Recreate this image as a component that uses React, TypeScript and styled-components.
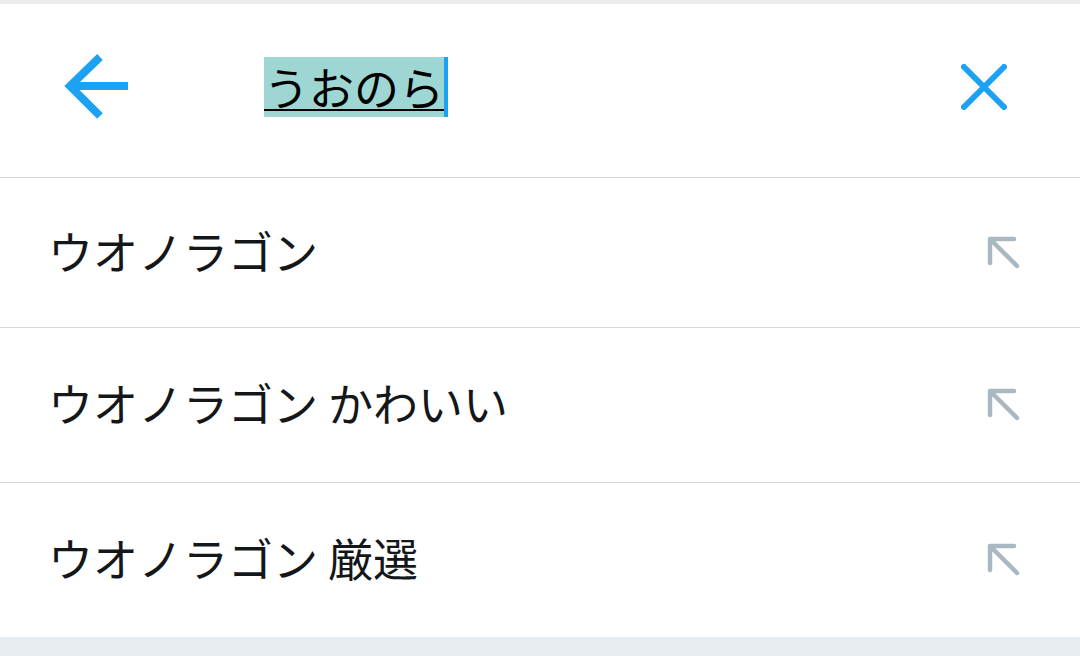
import React from "react";
import styled, { createGlobalStyle } from "styled-components";

const Global = createGlobalStyle`
  html, body { margin: 0; padding: 0; background: #ffffff; }
  body { font-family: "Noto Sans CJK JP", "Noto Sans", sans-serif; }
`;

const Page = styled.div`
  width: 1080px;
  height: 656px;
  display: flex;
  flex-direction: column;
  background: #e6ecf0;
  overflow: hidden;
`;

const TopStrip = styled.div`
  height: 4px;
  flex-shrink: 0;
  background: #ebebeb;
`;

const Header = styled.header`
  height: 174px;
  flex-shrink: 0;
  box-sizing: border-box;
  background: #fff;
  border-bottom: 1px solid #d6d6d6;
  display: flex;
  align-items: center;
  padding: 0 73px 7px 64px;
`;

const IconButton = styled.button`
  border: 0;
  background: none;
  padding: 0;
  margin: 0;
  display: flex;
  align-items: center;
  justify-content: center;
  cursor: pointer;
`;

const SearchField = styled.div`
  flex: 1;
  display: flex;
  align-items: center;
  padding-left: 136px;
`;

const Composing = styled.span`
  display: inline-block;
  height: 60px;
  line-height: 60px;
  font-size: 45px;
  color: #000;
  background: linear-gradient(#000, #000) no-repeat 0 52px / 100% 2px, #9dd6d2;
`;

const Caret = styled.span`
  display: inline-block;
  width: 4px;
  height: 60px;
  background: #1da1f2;
`;

const List = styled.ul`
  list-style: none;
  margin: 0;
  padding: 0;
  background: #fff;
  flex-shrink: 0;
`;

const Row = styled.li<{ $h: number; $last?: boolean }>`
  height: ${(p) => p.$h}px;
  display: flex;
  align-items: center;
  justify-content: space-between;
  padding: 0 57px 0 48px;
  border-bottom: ${(p) => (p.$last ? "none" : "1px solid #d6d6d6")};
`;

const RowText = styled.span`
  font-size: 45px;
  color: #14171a;
  line-height: 1;
  margin-top: -5px;
`;

const BackArrow = () => (
  <svg width="64" height="66" viewBox="0 0 64 66" fill="none">
    <path d="M64 32H6" stroke="#1da1f2" strokeWidth="8" />
    <path d="M36 3L6 32L36 62" stroke="#1da1f2" strokeWidth="8" strokeLinejoin="miter" />
  </svg>
);

const CloseIcon = () => (
  <svg width="46" height="46" viewBox="0 0 46 46" fill="none">
    <path d="M3 3L43 43M43 3L3 43" stroke="#1da1f2" strokeWidth="6" strokeLinecap="round" />
  </svg>
);

const FillArrow = () => (
  <svg width="36" height="36" viewBox="0 0 36 36" fill="none">
    <path
      d="M3 28V4H27M4 5L30 31"
      stroke="#aab8c2"
      strokeWidth="4.5"
      strokeLinecap="round"
      strokeLinejoin="round"
    />
  </svg>
);

const items = [
  { text: "ウオノラゴン", h: 149 },
  { text: "ウオノラゴン かわいい", h: 154 },
  { text: "ウオノラゴン 厳選", h: 154 },
];

export default function App() {
  return (
    <Page>
      <Global />
      <TopStrip />
      <Header>
        <IconButton aria-label="戻る">
          <BackArrow />
        </IconButton>
        <SearchField>
          <Composing>うおのら</Composing>
          <Caret />
        </SearchField>
        <IconButton aria-label="クリア">
          <CloseIcon />
        </IconButton>
      </Header>
      <List>
        {items.map((it, i) => (
          <Row key={it.text} $h={it.h} $last={i === items.length - 1}>
            <RowText>{it.text}</RowText>
            <FillArrow />
          </Row>
        ))}
      </List>
    </Page>
  );
}
